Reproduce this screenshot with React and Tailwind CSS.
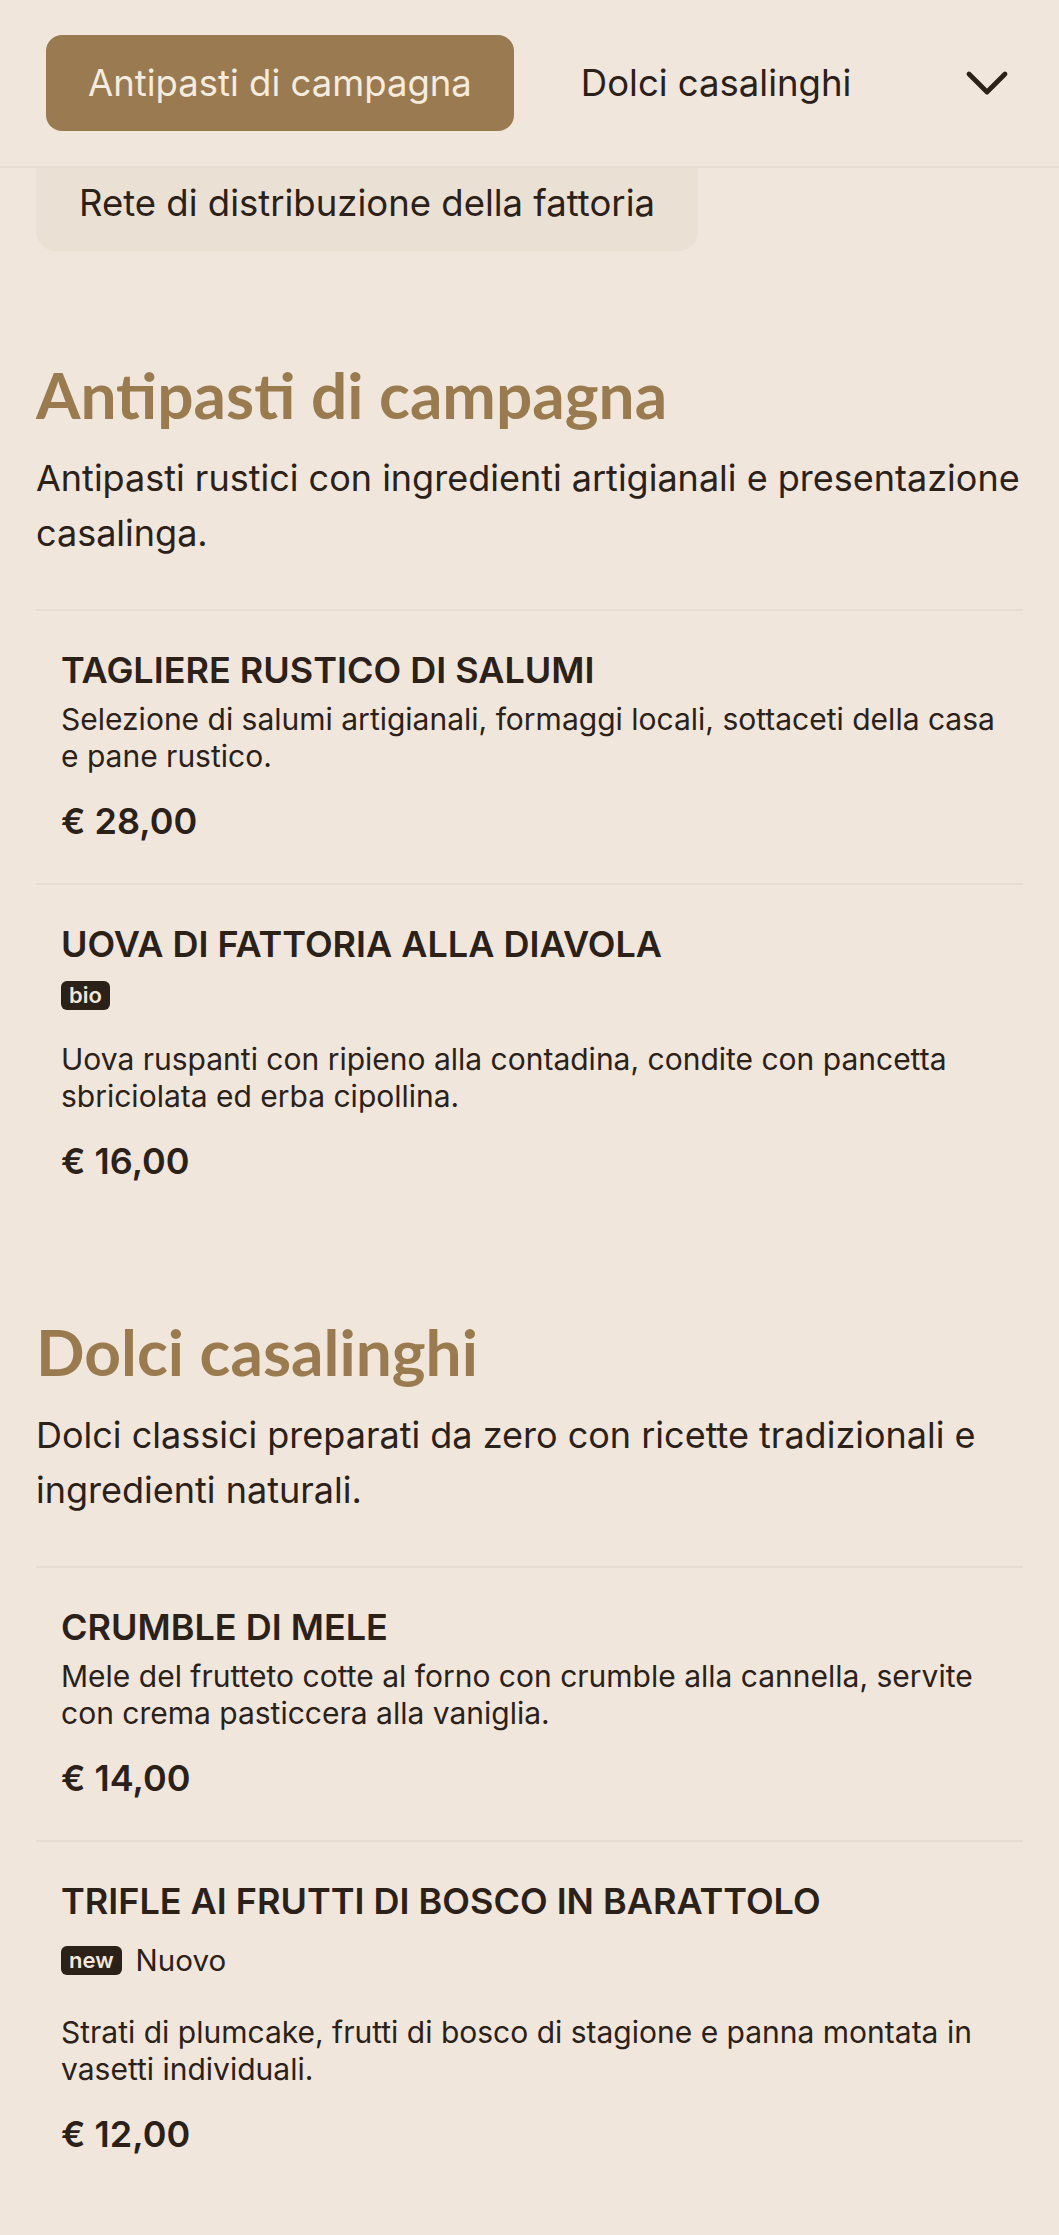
import React from "react";

const sections = [
  {
    id: "antipasti",
    title: "Antipasti di campagna",
    description:
      "Antipasti rustici con ingredienti artigianali e presentazione casalinga.",
    items: [
      {
        name: "TAGLIERE RUSTICO DI SALUMI",
        description:
          "Selezione di salumi artigianali, formaggi locali, sottaceti della casa e pane rustico.",
        price: "€ 28,00",
      },
      {
        name: "UOVA DI FATTORIA ALLA DIAVOLA",
        tag: "bio",
        description:
          "Uova ruspanti con ripieno alla contadina, condite con pancetta sbriciolata ed erba cipollina.",
        price: "€ 16,00",
      },
    ],
  },
  {
    id: "dolci",
    title: "Dolci casalinghi",
    description:
      "Dolci classici preparati da zero con ricette tradizionali e ingredienti naturali.",
    items: [
      {
        name: "CRUMBLE DI MELE",
        description:
          "Mele del frutteto cotte al forno con crumble alla cannella, servite con crema pasticcera alla vaniglia.",
        price: "€ 14,00",
      },
      {
        name: "TRIFLE AI FRUTTI DI BOSCO IN BARATTOLO",
        tag: "new",
        tagLabel: "Nuovo",
        description:
          "Strati di plumcake, frutti di bosco di stagione e panna montata in vasetti individuali.",
        price: "€ 12,00",
      },
    ],
  },
];

const Chevron = () => (
  <svg width="44" height="26" viewBox="0 0 44 26" fill="none" aria-hidden="true">
    <polyline
      points="4,4 22,22 40,4"
      stroke="#2b2118"
      strokeWidth="4.8"
      strokeLinecap="round"
      strokeLinejoin="round"
    />
  </svg>
);

const MenuItem = ({ item }) => (
  <div className="border-t-2 border-[#e7ddd1] pt-[39px] pb-[42px] px-[25px]">
    <h3 className="text-[36px] font-semibold leading-[40px] text-[#2b2118]">
      {item.name}
    </h3>

    {/* Tags */}
    {item.tag && (
      <div className="mt-[17px] flex items-center gap-[14px]">
        <span className="h-[29px] px-[8px] rounded-[6px] bg-[#2b2118] text-[#f0e6dc] text-[22px] font-semibold leading-[29px]">
          {item.tag}
        </span>
        {item.tagLabel && (
          <span className="text-[29.5px] leading-[45px] text-[#2b2118]">
            {item.tagLabel}
          </span>
        )}
      </div>
    )}

    <p
      className={`${item.tag ? "mt-[31px]" : "mt-[11px]"} text-[30px] leading-[36.5px] text-[#2b2118]`}
    >
      {item.description}
    </p>
    <p className="mt-[27px] text-[36px] font-semibold leading-[40px] text-[#2b2118]">
      {item.price}
    </p>
  </div>
);

const App = () => {
  return (
    <div className="min-h-screen bg-[#f0e6dc] font-['Inter',sans-serif] text-[#2b2118]">
      {/* Category tabs */}
      <header className="h-[168px] border-b-2 border-[#e8ded3] flex items-center pl-[46px] pr-[50px]">
        <button className="h-[96px] px-[42px] rounded-[16px] bg-[#9a7a50] text-[#f5ebdf] text-[36.5px] leading-none">
          Antipasti di campagna
        </button>
        <button className="ml-[25px] h-[96px] px-[42px] text-[36.5px] leading-none text-[#2b2118]">
          Dolci casalinghi
        </button>
        <button className="ml-auto" aria-label="Apri categorie">
          <Chevron />
        </button>
      </header>

      <main className="px-[36px] pb-[40px]">
        {/* Partially scrolled chip */}
        <div className="w-fit h-[83px] pb-[12px] px-[43px] flex items-center rounded-b-[20px] bg-[#eae0d4]">
          <span className="text-[36.5px] leading-none">
            Rete di distribuzione della fattoria
          </span>
        </div>

        {sections.map((section, i) => (
          <section
            key={section.id}
            id={section.id}
            className={i === 0 ? "mt-[104px]" : "mt-[89px]"}
          >
            <h2 className="font-['Lato',sans-serif] font-bold text-[64px] leading-[80px] text-[#9a7b4f]">
              {section.title}
            </h2>
            <p className="mt-[16px] text-[36px] leading-[55px]">
              {section.description}
            </p>
            <div className="mt-[48px]">
              {section.items.map((item) => (
                <MenuItem key={item.name} item={item} />
              ))}
            </div>
          </section>
        ))}
      </main>
    </div>
  );
};

export default App;
